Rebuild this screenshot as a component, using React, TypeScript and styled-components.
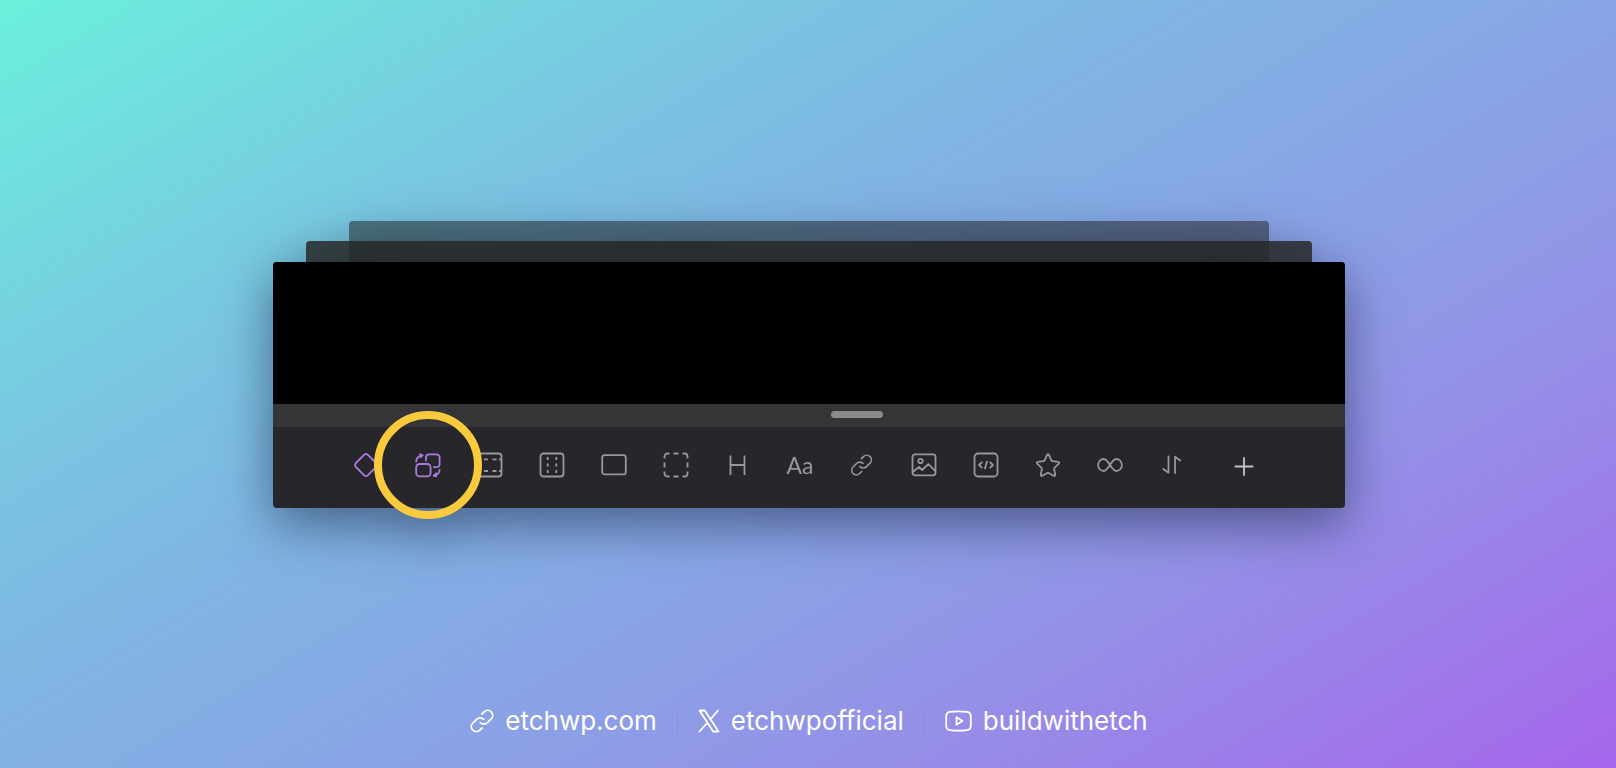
import React from "react";
import styled, { createGlobalStyle } from "styled-components";

const GlobalStyle = createGlobalStyle`
  * { box-sizing: border-box; }
  body { margin: 0; font-family: Inter, "Liberation Sans", sans-serif; }
`;

const Page = styled.div`
  min-height: 100vh;
  display: flex;
  flex-direction: column;
  padding-left: 2px;
  background: linear-gradient(149deg, #6bf0dc 0%, #72dbdf 13%, #7ac5e1 27%, #80b4e3 41%, #87a8e5 53%, #8d9de6 63%, #9491e7 73%, #9c7de9 86%, #a666ec 100%);
`;

const Stage = styled.main`
  flex: 1;
  display: flex;
  align-items: center;
  justify-content: center;
  padding-top: 55px;
`;

const Stack = styled.div`
  width: calc(100% - 542px);
  min-width: 1000px;
  display: flex;
  flex-direction: column;
  filter: drop-shadow(0 16px 26px rgba(20, 30, 60, 0.55));
`;

const BackSheet = styled.div`
  height: 41px;
  margin: 0 76px -21px;
  border-radius: 4px 4px 0 0;
  background: rgba(30, 32, 32, 0.5);
`;

const MiddleSheet = styled.div`
  height: 21px;
  margin: 0 33px;
  border-radius: 4px 4px 0 0;
  background: rgba(38, 40, 38, 0.84);
`;

const Editor = styled.section`
  border-radius: 4px;
  background: #27272b;
`;

const Canvas = styled.div`
  height: 142px;
  border-radius: 4px 4px 0 0;
  background: #000;
`;

const Strip = styled.div`
  height: 23px;
  display: flex;
  align-items: center;
  justify-content: center;
  padding: 0 0 2px 96px;
  background: #353538;
`;

const Handle = styled.button`
  width: 52px;
  height: 7px;
  padding: 0;
  border: 0;
  border-radius: 4px;
  background: #8a8a8d;
`;

const Toolbar = styled.nav`
  height: 81px;
  display: flex;
  align-items: center;
  padding: 0 62px 5px;
`;

const Tool = styled.button<{ $accent?: boolean; $spaced?: boolean; $bright?: boolean }>`
  position: relative;
  width: 62px;
  height: 48px;
  margin-left: ${(p) => (p.$spaced ? "10px" : "0")};
  padding: 0;
  border: 0;
  background: none;
  display: flex;
  align-items: center;
  justify-content: center;
  color: ${(p) => (p.$accent ? "#a97de0" : p.$bright ? "#c4c4c7" : "#98979b")};
`;

const Glyph = styled.svg`
  width: 26px;
  height: 26px;
  fill: none;
  stroke: currentColor;
  stroke-width: 1.8;
  stroke-linecap: round;
  stroke-linejoin: round;
`;

const Letters = styled.span`
  font: 400 23px/26px Lato, sans-serif;
`;

const Ring = styled.span`
  position: absolute;
  z-index: 1;
  top: 50%;
  left: 50%;
  width: 108px;
  height: 108px;
  transform: translate(-50%, -50%);
  border: 8px solid #f9c93e;
  border-radius: 50%;
`;

const Footer = styled.footer`
  height: 94px;
  display: flex;
  align-items: center;
  justify-content: center;
`;

const Social = styled.a`
  display: flex;
  align-items: center;
  gap: 11px;
  padding: 0 20px;
  color: #fff;
  font-size: 26px;
  line-height: 32px;
  text-decoration: none;

  & + & { border-left: 1px solid rgba(140, 140, 200, 0.5); }
`;

const SocialGlyph = styled(Glyph)<{ $w: number }>`
  width: ${(p) => p.$w}px;
  height: 24px;
`;

const chain = (
  <>
    <path d="M10.3 13.7a5 5 0 0 0 7.1 0l3.8-3.8a5 5 0 0 0-7.1-7.1l-2.2 2.2" />
    <path d="M13.7 10.3a5 5 0 0 0-7.1 0l-3.8 3.8a5 5 0 0 0 7.1 7.1l2.2-2.2" />
  </>
);

type ToolSpec = { label: string; accent?: boolean; ringed?: boolean; letters?: string; art?: React.ReactNode };

const tools: ToolSpec[] = [
  { label: "Element", accent: true, art: <path d="M11.3 2.6Q13 1.2 14.7 2.6L23.2 11.2Q24.7 13 23.2 14.8L14.7 23.4Q13 24.8 11.3 23.4L2.8 14.8Q1.3 13 2.8 11.2Z" /> },
  {
    label: "Component", accent: true, ringed: true,
    art: (
      <>
        <rect x="1.2" y="12" width="14.4" height="12.4" rx="3.4" />
        <path d="M11 8.5V5.400a3 3 0 0 1 3-3h7.600a3 3 0 0 1 3 3v6.800a3 3 0 0 1-3 3h-2.600" />
        <path d="M1.200 9.500Q1.500 5 5.500 3.800" />
        <path d="M24.600 18Q24.300 22 20.500 23.200" />
        <path fill="currentColor" strokeWidth="1" d="M5 1.800 8.300 3 6 5.600zM21 20.800 17.800 23.800 21.200 24.800z" />
      </>
    ),
  },
  { label: "Row", art: (<><rect x="1.5" y="1.5" width="23" height="23" rx="3" /><path strokeLinecap="butt" d="M2 7.300h1.500M7 7.300h4M15.500 7.300h4M22 7.300h2M2 19h1.500M7 19h4M15.500 19h4M22 19h2" /></>) },
  { label: "Column", art: (<><rect x="1.5" y="1.5" width="23" height="23" rx="3" /><path strokeLinecap="butt" d="M8.700 5v3M8.700 11.500v3M8.700 18v3M17.300 5v3M17.300 11.500v3M17.300 18v3" /></>) },
  { label: "Container", art: <rect x="1.2" y="3.2" width="23.6" height="19.2" rx="2.5" /> },
  { label: "Group", art: <path strokeLinecap="butt" d="M1.500 6.500v-2a3 3 0 0 1 3-3h2M10.500 1.500h5M19.500 1.500h2a3 3 0 0 1 3 3v2M24.500 10.500v5M24.500 19.500v2a3 3 0 0 1-3 3h-2M15.500 24.500h-5M6.500 24.500h-2a3 3 0 0 1-3-3v-2M1.500 15.500v-5" /> },
  { label: "Heading", art: <path strokeLinecap="butt" d="M5.500 3.500v19.500M19.500 3.500v19.500M5.500 13h14" /> },
  { label: "Text", letters: "Aa" },
  { label: "Link", art: <g transform="translate(1.500 2) scale(.92)">{chain}</g> },
  { label: "Image", art: (<><rect x="1.500" y="2.300" width="23" height="21" rx="2.500" /><circle cx="9.500" cy="9" r="2.200" /><path d="M2 19.800 8 15 11.200 18 17.500 12 24 18.800" /></>) },
  { label: "Code", art: (<><rect x="1.500" y="1.500" width="23" height="23" rx="3.500" /><path d="M8.800 10.300 6 13l2.800 2.700M17.200 10.300 20 13l-2.800 2.700M14 9.500l-2 7" /></>) },
  { label: "Icon", art: <path d="M12.100 2.800q.9-1.500 1.800 0l2.500 5.600q.3.700 1 .8l5.800.7q1.700.4.600 1.700l-4.300 4.200q-.5.500-.4 1.200l1.100 5.700q.1 1.700-1.500 1l-5-2.700q-.7-.4-1.400 0l-5 2.700q-1.600.7-1.500-1l1.100-5.700q.1-.7-.4-1.200L2.200 11.600q-1.100-1.300.6-1.700l5.800-.7q.7-.1 1-.8z" /> },
  { label: "Loop", art: <path d="M13 13C10.800 9.500 9.300 7 6.700 7A5.600 6 0 0 0 6.700 19C9.300 19 10.800 16.500 13 13S16.700 7 19.300 7A5.600 6 0 0 1 19.300 19C16.700 19 15.200 16.500 13 13Z" /> },
  { label: "Condition", art: <path d="M9.500 4.500v16.200L4.300 17M16 21V4.800L21.200 8.500" /> },
];

export default function App() {
  return (
    <>
      <GlobalStyle />
      <Page>
        <Stage>
          <Stack>
            <BackSheet />
            <MiddleSheet />
            <Editor>
              <Canvas />
              <Strip><Handle aria-label="Resize panel" /></Strip>
              <Toolbar aria-label="Elements">
                {tools.map((t) => (
                  <Tool key={t.label} aria-label={t.label} $accent={t.accent}>
                    {t.letters ? <Letters>{t.letters}</Letters> : <Glyph viewBox="0 0 26 26">{t.art}</Glyph>}
                    {t.ringed && <Ring />}
                  </Tool>
                ))}
                <Tool aria-label="Add" $spaced $bright>
                  <Glyph viewBox="0 0 26 26"><path d="M13 6v17M4.500 14.500h17" /></Glyph>
                </Tool>
              </Toolbar>
            </Editor>
          </Stack>
        </Stage>
        <Footer>
          <Social href="#site">
            <SocialGlyph $w={24} viewBox="0 0 24 24">{chain}</SocialGlyph>
            etchwp.com
          </Social>
          <Social href="#x">
            <SocialGlyph $w={22} viewBox="0 0 22 24">
              <path d="M1.500 1.500h5.300L20.500 22.500h-5.300zM20 1.500 12.400 10.300M9.600 13.500 1.500 22.500" />
            </SocialGlyph>
            etchwpofficial
          </Social>
          <Social href="#youtube">
            <SocialGlyph $w={27} viewBox="0 0 27 24">
              <path d="M5 2.900Q13.500 1.700 22 2.900Q25.600 3.400 25.800 7V17Q25.600 20.600 22 21.100Q13.500 22.300 5 21.100Q1.400 20.600 1.200 17V7Q1.400 3.400 5 2.900Z" />
              <path d="M11.500 8.300v7.400l6-3.700z" />
            </SocialGlyph>
            buildwithetch
          </Social>
        </Footer>
      </Page>
    </>
  );
}
